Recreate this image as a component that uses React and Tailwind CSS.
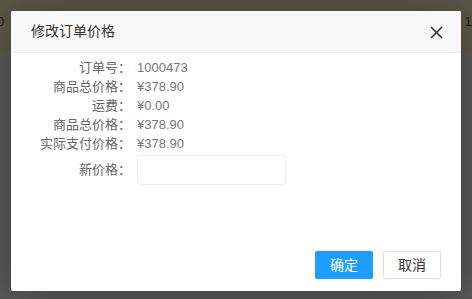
export default function App() {
  const rows = [
    ['订单号：', '1000473'],
    ['商品总价格：', '¥378.90'],
    ['运费：', '¥0.00'],
    ['商品总价格：', '¥378.90'],
    ['实际支付价格：', '¥378.90'],
  ];

  return (
    <div
      className="relative w-[472px] h-[299px] overflow-hidden bg-[#585858]"
      style={{ fontFamily: '"Liberation Sans", "Noto Sans CJK SC", sans-serif' }}
    >
      {/* page behind the overlay */}
      <div className="h-[52px] bg-[#5b5848] flex justify-between text-[13px] text-[#1f1e18] pt-[12px]">
        <span className="-ml-[3px]">0</span>
        <span className="mr-[-6px]">11</span>
      </div>

      {/* dialog */}
      <div className="absolute left-[11px] top-[11px] w-[450px] h-[280px] bg-white rounded-[2px] flex flex-col shadow-[1px_1px_50px_rgba(0,0,0,0.3)]">
        <div className="h-[42px] shrink-0 bg-[#f8f8f8] border-b border-[#eee] rounded-t-[2px] flex items-center justify-between pl-[20px] pr-[18px]">
          <span className="text-[14px] text-[#333]">修改订单价格</span>
          <svg width="13" height="13" viewBox="0 0 13 13" className="mt-[1px]">
            <path d="M1 1L12 12M12 1L1 12" stroke="#333" strokeWidth="1.6" />
          </svg>
        </div>

        <div className="flex-1 pt-[5px] text-[13px]">
          {rows.map(([label, value], i) => (
            <div key={i} className="flex h-[19px] items-center">
              <span className="w-[120px] text-right text-[#666]">{label}</span>
              <span className="ml-[6px] text-[#777]">{value}</span>
            </div>
          ))}
          <div className="flex items-center mt-[2px]">
            <span className="w-[120px] text-right text-[#666]">新价格：</span>
            <input className="ml-[6px] w-[149px] h-[30px] border border-[#eee] rounded-[3px] outline-none px-2" />
          </div>
        </div>

        <div className="flex justify-end gap-[10px] pr-[20px] pb-[12px] text-[14px]">
          <button className="w-[58px] h-[28px] rounded-[2px] bg-[#1e9fff] border border-[#1e9fff] text-white">确定</button>
          <button className="w-[58px] h-[28px] rounded-[2px] bg-white border border-[#dedede] text-[#333]">取消</button>
        </div>
      </div>
    </div>
  );
}
